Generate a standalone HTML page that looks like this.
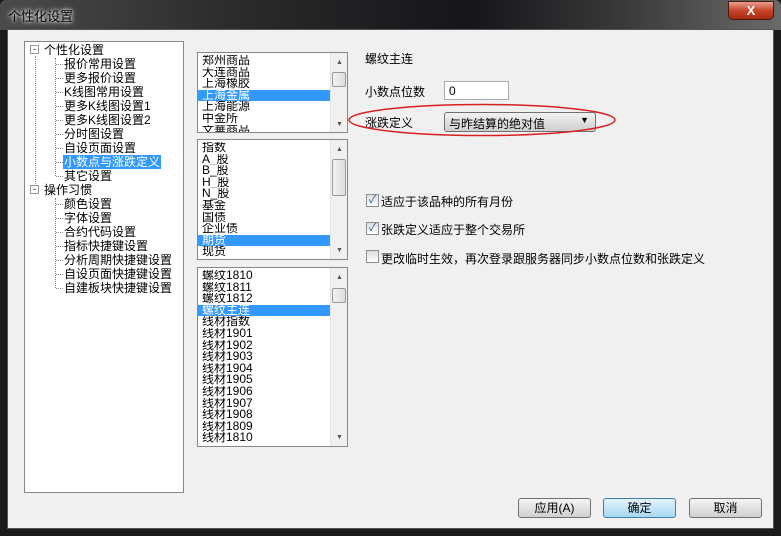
<!DOCTYPE html>
<html><head><meta charset="utf-8"><style>
*{box-sizing:border-box;margin:0;padding:0}
body{width:781px;height:536px;overflow:hidden;background:#1a1a1a;font-family:"Liberation Sans","SimSun","Noto Sans CJK SC",sans-serif;font-size:12px;position:relative}
.title{position:absolute;left:0;top:0;width:781px;height:30px;background:linear-gradient(90deg,#4a4a4a 0%,#2b2b2b 30%,#15151a 60%,#3a3a3a 80%,#6a6a6a 100%);border-radius:6px 6px 0 0}
.title span{position:absolute;left:8px;top:6px;color:#000;font-size:13px;text-shadow:0 0 6px #fff,0 0 3px #fff}
.close{position:absolute;left:728px;top:1px;width:46px;height:19px;border:1px solid #4a1a10;border-radius:0 0 5px 5px;background:linear-gradient(#e8a090,#c8452a 50%,#a52a10);color:#fff;font-weight:bold;text-align:center;font-size:13px;line-height:17px}
.client{position:absolute;left:7px;top:29px;width:767px;height:500px;background:#f0f0f0;border:1px solid #555}
.abs{position:absolute}
.box{position:absolute;background:#fff;border:1px solid #828790}
.tree div{position:absolute;height:14px;line-height:14px;white-space:nowrap;font-size:12px}
.sel{background:#3399ff;color:#fff}
.list{overflow:hidden}
.list .it{height:11.6px;line-height:11.6px;padding-left:4px;font-size:12px;white-space:nowrap;width:132px;overflow:hidden}
.sb{position:absolute;right:0;top:0;width:17px;height:100%;background:#f0f0f0;border-left:1px solid #e4e4e4}
.thumb{position:absolute;left:1px;width:14px;border:1px solid #999;border-radius:2px;background:linear-gradient(90deg,#f2f2f2,#ddd)}
.arr{position:absolute;left:5px;font-size:7px;color:#555}
.btn{position:absolute;top:498px;width:73px;height:20px;border:1px solid #707070;border-radius:3px;background:linear-gradient(#f4f4f4,#e2e2e2 50%,#d0d0d0);text-align:center;line-height:18px;font-size:12px}
.cb{position:absolute;left:366px;width:13px;height:13px;border:1px solid #8e8f8f;background:linear-gradient(#ddd,#fff)}
.dot{position:absolute;border-left:1px dotted #888}
.tree .hd{position:absolute;border-top:1px dotted #888;width:7px;height:0}
</style></head><body>
<div class="title"><span>个性化设置</span><div class="close">X</div></div>
<div class="client"></div>
<!-- tree -->
<div class="box tree" style="left:24px;top:41px;width:160px;height:452px">
<div class="dot" style="left:10px;top:14px;height:136px"></div>
<div class="dot" style="left:30px;top:16px;height:118px"></div>
<div class="dot" style="left:30px;top:156px;height:90px"></div>
<div class="hd" style="left:31px;top:22px"></div><div class="hd" style="left:31px;top:36px"></div><div class="hd" style="left:31px;top:50px"></div><div class="hd" style="left:31px;top:64px"></div><div class="hd" style="left:31px;top:78px"></div><div class="hd" style="left:31px;top:92px"></div><div class="hd" style="left:31px;top:106px"></div><div class="hd" style="left:31px;top:120px"></div><div class="hd" style="left:31px;top:134px"></div>
<div class="hd" style="left:31px;top:162px"></div><div class="hd" style="left:31px;top:176px"></div><div class="hd" style="left:31px;top:190px"></div><div class="hd" style="left:31px;top:204px"></div><div class="hd" style="left:31px;top:218px"></div><div class="hd" style="left:31px;top:232px"></div><div class="hd" style="left:31px;top:246px"></div>
<div class="abs" style="left:5px;top:3px;width:9px;height:9px;border:1px solid #999;background:#fff;font-size:9px;line-height:6px;text-align:center">-</div>
<div class="abs" style="left:5px;top:143px;width:9px;height:9px;border:1px solid #999;background:#fff;font-size:9px;line-height:6px;text-align:center">-</div>
<div style="left:19px;top:1px">个性化设置</div>
<div style="left:39px;top:15px">报价常用设置</div>
<div style="left:39px;top:29px">更多报价设置</div>
<div style="left:39px;top:43px">K线图常用设置</div>
<div style="left:39px;top:57px">更多K线图设置1</div>
<div style="left:39px;top:71px">更多K线图设置2</div>
<div style="left:39px;top:85px">分时图设置</div>
<div style="left:39px;top:99px">自设页面设置</div>
<div class="sel" style="left:38px;top:113px;padding:0 1px">小数点与涨跌定义</div>
<div style="left:39px;top:127px">其它设置</div>
<div style="left:19px;top:141px">操作习惯</div>
<div style="left:39px;top:155px">颜色设置</div>
<div style="left:39px;top:169px">字体设置</div>
<div style="left:39px;top:183px">合约代码设置</div>
<div style="left:39px;top:197px">指标快捷键设置</div>
<div style="left:39px;top:211px">分析周期快捷键设置</div>
<div style="left:39px;top:225px">自设页面快捷键设置</div>
<div style="left:39px;top:239px">自建板块快捷键设置</div>
</div>
<!-- list1 -->
<div class="box list" style="left:197px;top:52px;width:151px;height:81px;padding-top:2px">
<div class="it">郑州商品</div><div class="it">大连商品</div><div class="it">上海橡胶</div><div class="it sel">上海金属</div><div class="it">上海能源</div><div class="it">中金所</div><div class="it">文華商品</div>
<div class="sb"><span class="arr" style="top:6px">▲</span><div class="thumb" style="top:19px;height:15px"></div><span class="arr" style="top:68px">▼</span></div>
</div>
<!-- list2 -->
<div class="box list" style="left:197px;top:139px;width:151px;height:121px;padding-top:2px">
<div class="it">指数</div><div class="it">A_股</div><div class="it">B_股</div><div class="it">H_股</div><div class="it">N_股</div><div class="it">基金</div><div class="it">国债</div><div class="it">企业债</div><div class="it sel">期货</div><div class="it">现货</div>
<div class="sb"><span class="arr" style="top:6px">▲</span><div class="thumb" style="top:19px;height:37px"></div><span class="arr" style="top:107px">▼</span></div>
</div>
<!-- list3 -->
<div class="box list" style="left:197px;top:267px;width:151px;height:180px;padding-top:2px">
<div class="it">螺纹1810</div><div class="it">螺纹1811</div><div class="it">螺纹1812</div><div class="it sel">螺纹主连</div><div class="it">线材指数</div><div class="it">线材1901</div><div class="it">线材1902</div><div class="it">线材1903</div><div class="it">线材1904</div><div class="it">线材1905</div><div class="it">线材1906</div><div class="it">线材1907</div><div class="it">线材1908</div><div class="it">线材1809</div><div class="it">线材1810</div>
<div class="sb"><span class="arr" style="top:6px">▲</span><div class="thumb" style="top:20px;height:15px"></div><span class="arr" style="top:166px">▼</span></div>
</div>
<!-- right -->
<div class="abs" style="left:365px;top:50px">螺纹主连</div>
<div class="abs" style="left:365px;top:83px">小数点位数</div>
<div class="abs" style="left:444px;top:81px;width:65px;height:19px;background:#fff;border:1px solid #abadb3;padding:2px 4px">0</div>
<div class="abs" style="left:365px;top:114px">涨跌定义</div>
<div class="abs" style="left:444px;top:112px;width:152px;height:20px;border:1px solid #707070;border-radius:3px;background:linear-gradient(#f2f2f2,#e0e0e0 50%,#cfcfcf);padding:2px 4px">与昨结算的绝对值<span style="position:absolute;right:6px;top:2px;font-size:9px">▼</span></div>
<svg class="abs" style="left:340px;top:100px" width="280" height="42"><ellipse cx="142" cy="20" rx="133" ry="15.5" fill="none" stroke="#d82020" stroke-width="1.5"/></svg>
<div class="cb" style="top:194px;color:#2a5aa8;font-size:11px;line-height:11px;text-align:center">✓</div>
<div class="abs" style="left:381px;top:193px">适应于该品种的所有月份</div>
<div class="cb" style="top:222px;color:#2a5aa8;font-size:11px;line-height:11px;text-align:center">✓</div>
<div class="abs" style="left:381px;top:221px">张跌定义适应于整个交易所</div>
<div class="cb" style="top:250px"></div>
<div class="abs" style="left:381px;top:250px">更改临时生效，再次登录跟服务器同步小数点位数和张跌定义</div>
<div class="btn" style="left:518px">应用(A)</div>
<div class="btn" style="left:603px;border-color:#3c7fb1;background:linear-gradient(#e5f4fc,#c4e5f6 50%,#a7d8f0)">确定</div>
<div class="btn" style="left:689px">取消</div>
</body></html>
